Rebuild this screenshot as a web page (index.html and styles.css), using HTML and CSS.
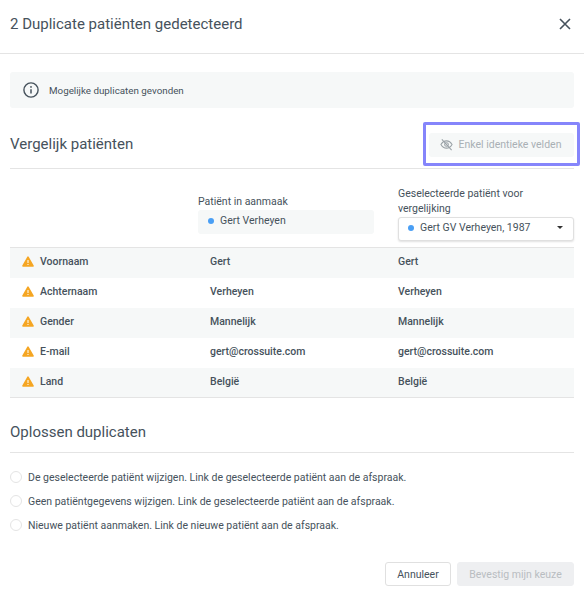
FILE: index.html
```html
<!DOCTYPE html>
<html lang="nl">
<head>
    <meta charset="UTF-8">
    <meta name="viewport" content="width=device-width, initial-scale=1.0">
    <title>Duplicate patiënten</title>
    <link rel="stylesheet" href="styles.css">
</head>
<body>
    <div class="modal">
        <div class="modal-header">
            <h1>2 Duplicate patiënten gedetecteerd</h1>
            <svg class="close-icon" width="14" height="14" viewBox="0 0 14 14"><path d="M2 2l10 10M12 2L2 12" stroke="#46525c" stroke-width="1.6" fill="none"/></svg>
        </div>

        <div class="modal-body">
            <div class="alert">
                <svg width="16" height="16" viewBox="0 0 16 16"><circle cx="8" cy="8" r="7.1" fill="none" stroke="#46525c" stroke-width="1.4"/><path d="M8 7.2v4.2" stroke="#46525c" stroke-width="1.5"/><circle cx="8" cy="4.9" r="0.9" fill="#46525c"/></svg>
                <span>Mogelijke duplicaten gevonden</span>
            </div>

            <div class="section-head compare-head">
                <h2>Vergelijk patiënten</h2>
                <div class="focus-ring">
                    <button class="btn-filter">
                        <svg width="13" height="13" viewBox="0 0 14 14" fill="none" stroke="#99a1a6" stroke-width="1.1"><path d="M1 7c1.500-2.600 3.500-3.900 6-3.900S11.500 4.400 13 7c-1.500 2.600-3.500 3.900-6 3.900S2.500 9.600 1 7z"/><circle cx="7" cy="7" r="2"/><path d="M2 1.500l10.500 11.500"/></svg>
                        Enkel identieke velden
                    </button>
                </div>
            </div>

            <div class="compare-cols">
                <div class="col-a">
                    <div class="col-label">Patiënt in aanmaak</div>
                    <div class="patient-box"><i class="dot"></i>Gert Verheyen</div>
                </div>
                <div class="col-b">
                    <div class="col-label">Geselecteerde patiënt voor vergelijking</div>
                    <div class="select"><i class="dot"></i>Gert GV Verheyen, 1987<i class="caret"></i></div>
                </div>
            </div>

            <div class="table">
                <div class="row">
                    <div class="field"><svg class="warn" width="12" height="11" viewBox="0 0 12 11"><path d="M6 1.200L11 10H1z" fill="#f5a623" stroke="#f5a623" stroke-width="1.600" stroke-linejoin="round"/><path d="M6 4v3M6 8v1" stroke="#fff" stroke-width="1"/></svg>Voornaam</div>
                    <div>Gert</div>
                    <div>Gert</div>
                </div>
                <div class="row">
                    <div class="field"><svg class="warn" width="12" height="11" viewBox="0 0 12 11"><path d="M6 1.200L11 10H1z" fill="#f5a623" stroke="#f5a623" stroke-width="1.600" stroke-linejoin="round"/><path d="M6 4v3M6 8v1" stroke="#fff" stroke-width="1"/></svg>Achternaam</div>
                    <div>Verheyen</div>
                    <div>Verheyen</div>
                </div>
                <div class="row">
                    <div class="field"><svg class="warn" width="12" height="11" viewBox="0 0 12 11"><path d="M6 1.200L11 10H1z" fill="#f5a623" stroke="#f5a623" stroke-width="1.600" stroke-linejoin="round"/><path d="M6 4v3M6 8v1" stroke="#fff" stroke-width="1"/></svg>Gender</div>
                    <div>Mannelijk</div>
                    <div>Mannelijk</div>
                </div>
                <div class="row">
                    <div class="field"><svg class="warn" width="12" height="11" viewBox="0 0 12 11"><path d="M6 1.200L11 10H1z" fill="#f5a623" stroke="#f5a623" stroke-width="1.600" stroke-linejoin="round"/><path d="M6 4v3M6 8v1" stroke="#fff" stroke-width="1"/></svg>E-mail</div>
                    <div>gert@crossuite.com</div>
                    <div>gert@crossuite.com</div>
                </div>
                <div class="row">
                    <div class="field"><svg class="warn" width="12" height="11" viewBox="0 0 12 11"><path d="M6 1.200L11 10H1z" fill="#f5a623" stroke="#f5a623" stroke-width="1.600" stroke-linejoin="round"/><path d="M6 4v3M6 8v1" stroke="#fff" stroke-width="1"/></svg>Land</div>
                    <div>België</div>
                    <div>België</div>
                </div>
            </div>

            <div class="section-head resolve-head">
                <h2>Oplossen duplicaten</h2>
            </div>

            <div class="options">
                <label class="option"><i class="radio"></i>De geselecteerde patiënt wijzigen. Link de geselecteerde patiënt aan de afspraak.</label>
                <label class="option"><i class="radio"></i>Geen patiëntgegevens wijzigen. Link de geselecteerde patiënt aan de afspraak.</label>
                <label class="option"><i class="radio"></i>Nieuwe patiënt aanmaken. Link de nieuwe patiënt aan de afspraak.</label>
            </div>

            <div class="actions">
                <button class="btn">Annuleer</button>
                <button class="btn btn-disabled" disabled>Bevestig mijn keuze</button>
            </div>
        </div>
    </div>
</body>
</html>
```

FILE: styles.css
```css
* {
    box-sizing: border-box;
}

body {
    font-family: Roboto, "Liberation Sans", sans-serif;
    background: #ffffff;
    margin: 0;
    color: #46525c;
    font-size: 10.5px;
}

.modal {
    width: 584px;
    height: 599px;
    overflow: hidden;
}

.modal-header {
    height: 54px;
    border-bottom: 1px solid #e4e4e4;
    padding: 0 12px 6px 10px;
    display: flex;
    align-items: center;
    justify-content: space-between;
}

h1 {
    margin: 0;
    font-size: 15px;
    font-weight: 400;
}

h2 {
    margin: 0;
    font-size: 15px;
    font-weight: 400;
}

.modal-body {
    padding: 18px 10px 0;
}

.alert {
    height: 36px;
    background: #f6f8f8;
    border-radius: 3px;
    display: flex;
    align-items: center;
    gap: 10px;
    padding-left: 13px;
    font-size: 9.8px;
}

.section-head {
    display: flex;
    align-items: center;
    justify-content: space-between;
    border-bottom: 1px solid #e4e4e4;
}

.compare-head {
    margin-top: 14px;
    height: 47px;
    padding-bottom: 2px;
}

.focus-ring {
    border: 3px solid #8585fb;
    border-radius: 2px;
    padding: 8px 3px;
    margin-right: -6px;
    height: 44px;
    align-self: flex-start;
}

.btn-filter {
    width: 145px;
    height: 24px;
    background: #f6f8f8;
    border: none;
    border-radius: 3px;
    color: #a9b0b5;
    font-family: inherit;
    font-size: 10.5px;
    padding: 0 2px 1px 0;
    display: flex;
    align-items: center;
    justify-content: center;
    gap: 6px;
}

.compare-cols {
    display: flex;
    height: 79px;
    border-bottom: 1px solid #e4e4e4;
    padding-left: 188px;
    gap: 24px;
    padding-top: 17px;
}

.col-a {
    width: 176px;
    padding-top: 8px;
}

.col-b {
    width: 176px;
}

.col-label {
    line-height: 15px;
    margin-bottom: 1px;
}

.patient-box {
    height: 24px;
    background: #f6f8f8;
    border-radius: 3px;
    display: flex;
    align-items: center;
    padding-left: 10px;
    padding-bottom: 3px;
}

.dot {
    width: 6px;
    height: 6px;
    border-radius: 50%;
    background: #4a9ff5;
    margin-right: 6px;
}

.select {
    height: 24px;
    background: #ffffff;
    border: 1px solid #e0e0e0;
    border-radius: 3px;
    box-shadow: 0 1px 2px rgba(0, 0, 0, 0.12);
    display: flex;
    align-items: center;
    padding: 0 9px 3px;
}

.caret {
    margin-left: auto;
    margin-right: 1px;
    border-left: 3px solid transparent;
    border-right: 3px solid transparent;
    border-top: 3px solid #333333;
}

.table {
    border-bottom: 1px solid #e4e4e4;
}

.row {
    display: grid;
    grid-template-columns: 200px 188px 1fr;
    height: 30px;
    align-items: center;
    font-weight: 500;
    padding-bottom: 3px;
}

.row:nth-child(odd) {
    background: #f6f8f8;
}

.row:last-child {
    height: 29px;
    padding-bottom: 2px;
}

.field {
    display: flex;
    align-items: center;
    padding-left: 12px;
    gap: 6px;
}

.resolve-head {
    margin-top: 22px;
    height: 33px;
    padding-bottom: 9px;
}

.options {
    margin-top: 12px;
}

.option {
    display: flex;
    align-items: center;
    height: 24px;
    gap: 6px;
}

.radio {
    width: 12px;
    height: 12px;
    border-radius: 50%;
    border: 1px solid #e4e4e4;
    background: #ffffff;
}

.actions {
    display: flex;
    justify-content: flex-end;
    gap: 6px;
    margin-top: 25px;
}

.btn {
    height: 24px;
    width: 66px;
    background: #ffffff;
    border: 1px solid #e0e0e0;
    border-radius: 3px;
    color: #46525c;
    font-family: inherit;
    font-size: 10.5px;
    padding: 0;
}

.btn-disabled {
    width: 117px;
    background: #eeeff1;
    border-color: #eeeff1;
    color: #b9bdc1;
}
```
